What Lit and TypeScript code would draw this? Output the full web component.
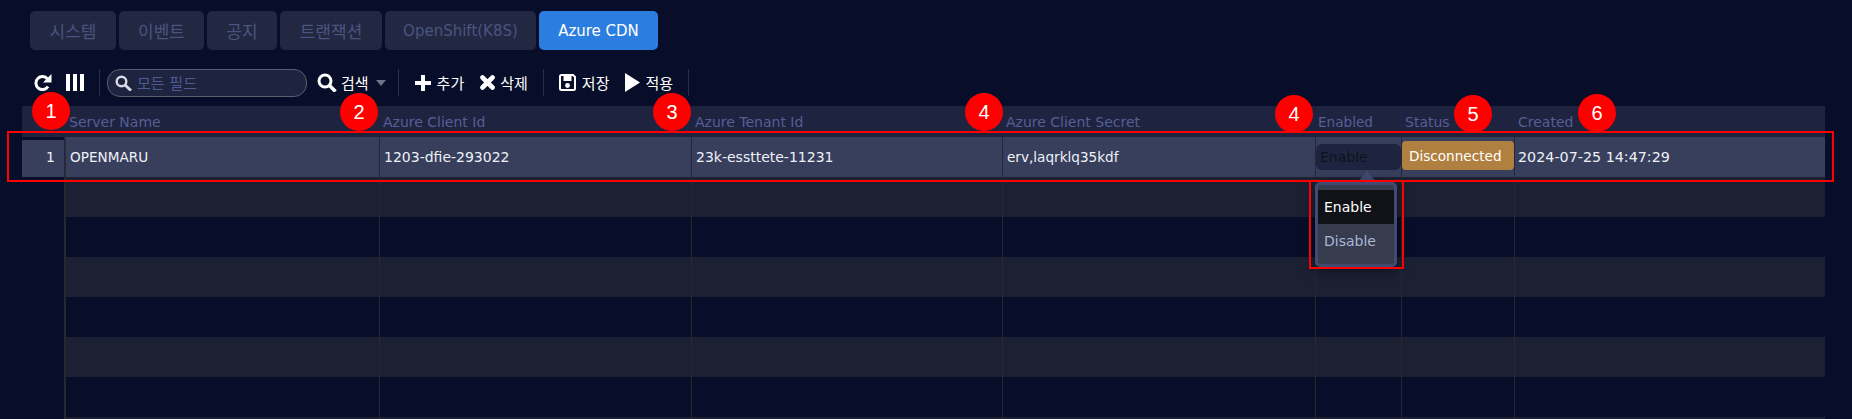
import { LitElement, html, css } from "lit";
import { customElement } from "lit/decorators.js";

@customElement("app-root")
export class AppRoot extends LitElement {
  static styles = css`
    :host {
      display: block;
      position: relative;
      width: 1852px;
      height: 419px;
      overflow: hidden;
      background: #080d29;
      font-family: "DejaVu Sans", "Noto Sans CJK KR", sans-serif;
      color: #fff;
    }
    .tabs { display: flex; gap: 3px; padding: 11px 0 0 30px; height: 39px; }
    .tab {
      height: 39px; border-radius: 5px; background: #222841; color: #4a5480;
      display: flex; align-items: center; justify-content: center; font-size: 15px;
    }
    .tab.ko { font-size: 17px; }
    .tab.active { background: #2b7de0; color: #fff; }
    .toolbar { display: flex; align-items: center; height: 27px; margin-top: 19px; padding-left: 33px; font-size: 15px; }
    .sep { width: 1px; height: 27px; background: #2a2f45; flex: none; }
    .search-box {
      box-sizing: border-box; width: 200px; height: 28px; border: 1px solid #5c5f6c; border-radius: 13px;
      background: #1e2340; display: flex; align-items: center; padding-left: 7px; gap: 5px; color: #4d5a94; font-size: 15px;
    }
    .tool { display: flex; align-items: center; gap: 5px; }
    .tool.wide { gap: 6px; }
    .grid { margin: 10px 0 0 22px; width: 1803px; }
    .row { display: grid; grid-template-columns: 42px 2px 313px 1px 311px 1px 310px 1px 312px 1px 85px 1px 112px 1px 1fr; height: 40px; }
    .head { height: 31px; background: #1e2340; color: #565f94; font-size: 14px; align-items: center; }
    .head .c { padding-left: 3px; }
    .head .c.narrow { padding-left: 2px; font-size: 13.6px; }
    .row.stripe > .c { background: #1b2033; }
    .row.sel { font-size: 14px; color: #eef1f8; }
    .row.sel > .c { background: #383f5c; }
    .c { display: flex; align-items: center; padding-left: 4px; white-space: nowrap; min-width: 0; }
    .v { background: #26282e; }
    .row.sel .v { background: #24283c; }
    .row.sel > .num { justify-content: flex-end; padding-right: 9px; margin-top: 3px; padding-bottom: 3px; }
    .badge-off { box-sizing: border-box; margin-top: -1px; height: 26px; width: 86px; border-radius: 6px; background: #1e2440; color: #10121c; padding-left: 4px; display: flex; align-items: center; }
    .status { height: 29px; width: 112px; margin-top: -3px; border-radius: 4px; background: #b08040; color: #fff; padding-left: 7px; display: flex; align-items: center; box-sizing: border-box; font-size: 13.6px; }
    .c.pill { padding: 0; }
    .tight { font-size: 13.6px; }
    .c.date { font-size: 14.3px; padding-left: 3px; }
    .mark {
      position: absolute; width: 38px; height: 38px; border-radius: 50%; background: #f00; color: #fff;
      display: flex; align-items: center; justify-content: center; font: 20px "Liberation Sans", sans-serif;
    }
    .box { position: absolute; box-sizing: border-box; border: 2px solid #f00; }
    .pop {
      position: absolute; left: 1315px; top: 182px; width: 82px; height: 85px; box-sizing: border-box;
      border: 3px solid #414a70; border-radius: 5px; background: #363c4d; padding-top: 5px;
      box-shadow: 0 4px 14px rgba(0,0,0,.5); font-size: 14px;
    }
    .pop div { height: 34px; display: flex; align-items: center; padding-left: 6px; color: #a9b6d6; }
    .pop .on { background: #101218; color: #fff; }
    .arrow { position: absolute; left: 1357px; top: 171px; }
  `;

  render() {
    const tabs = [["시스템", 86, 1], ["이벤트", 85, 1], ["공지", 70, 1], ["트랜잭션", 102, 1], ["OpenShift(K8S)", 151, 0], ["Azure CDN", 119, 0]] as const;
    const stripe = (s: boolean) => html`<div class="row ${s ? "stripe" : ""}">
      ${Array.from({ length: 15 }, (_, i) => {
        if (i === 0) return html`<div></div>`;
        return i % 2 === 1 ? html`<div class="v"></div>` : html`<div class="c"></div>`;
      })}
    </div>`;
    const marks = [[32, 92, 1], [340, 93, 2], [653, 93, 3], [965, 93, 4], [1275, 95, 4], [1454, 95, 5], [1578, 94, 6]];
    return html`
      <div class="tabs">
        ${tabs.map(([t, w, k], i) => html`<div class="tab ${i === 5 ? "active" : ""} ${k ? "ko" : ""}" style="width:${w}px">${t}</div>`)}
      </div>
      <div class="toolbar">
        <svg width="19" height="17" viewBox="0 0 19 17" style="margin-right:14px"><path d="M15 12.5A6.5 6.5 0 1 1 14.5 5" fill="none" stroke="#fff" stroke-width="3"/><path d="M18.5 0v8.5H10z" fill="#fff"/></svg>
        <svg width="18" height="17" viewBox="0 0 18 17" style="margin-right:15px"><path d="M0 0h4v17H0zM7 0h4v17H7zM14 0h4v17h-4z" fill="#fff"/></svg>
        <div class="sep" style="margin-right:7px"></div>
        <div class="search-box">
          <svg width="17" height="16" viewBox="0 0 17 16"><circle cx="6.5" cy="6.5" r="4.8" fill="none" stroke="#d7dae4" stroke-width="2.4"/><path d="M10 10l6 5.5" stroke="#d7dae4" stroke-width="3"/></svg>
          모든 필드
        </div>
        <div class="tool" style="margin-left:10px">
          <svg width="20" height="19" viewBox="0 0 20 19"><circle cx="8" cy="8" r="6" fill="none" stroke="#fff" stroke-width="3"/><path d="M12.5 12.5l6 6" stroke="#fff" stroke-width="3.5"/></svg>
          <span style="margin-left:-1px">검색</span>
          <svg width="10" height="6" viewBox="0 0 10 6" style="margin-left:2px"><path d="M0 0h10L5 6z" fill="#6f7488"/></svg>
        </div>
        <div class="sep" style="margin:0 16px 0 12px"></div>
        <div class="tool wide">
          <svg width="16" height="16" viewBox="0 0 16 16"><path d="M6 0h4v6h6v4h-6v6H6v-6H0V6h6z" fill="#fff"/></svg>
          <span>추가</span>
        </div>
        <div class="tool" style="margin-left:16px">
          <svg width="15" height="15" viewBox="0 0 15 15"><path d="M2.5 2.5l10 10M12.5 2.5l-10 10" stroke="#fff" stroke-width="4.6" stroke-linecap="round"/></svg>
          <span>삭제</span>
        </div>
        <div class="sep" style="margin:0 15px"></div>
        <div class="tool wide">
          <svg width="17" height="17" viewBox="0 0 17 17"><path d="M2.5 1H14l2 2v11.5a1.5 1.5 0 0 1-1.5 1.5h-12A1.5 1.5 0 0 1 1 14.5v-12A1.5 1.5 0 0 1 2.5 1z" fill="none" stroke="#fff" stroke-width="2"/><path d="M4.5 2h8v5h-8z" fill="#fff"/><circle cx="8.5" cy="11.5" r="2.4" fill="#fff"/></svg>
          <span>저장</span>
        </div>
        <div class="tool" style="margin-left:16px">
          <svg width="15" height="19" viewBox="0 0 15 19"><path d="M0 0l15 9.5L0 19z" fill="#fff"/></svg>
          <span>적용</span>
        </div>
        <div class="sep" style="margin-left:15px"></div>
      </div>
      <div class="grid">
        <div class="row head">
          <div></div><div></div>
          <div class="c">Server Name</div><div></div>
          <div class="c">Azure Client Id</div><div></div>
          <div class="c">Azure Tenant Id</div><div></div>
          <div class="c">Azure Client Secret</div><div></div>
          <div class="c narrow">Enabled</div><div></div>
          <div class="c">Status</div><div></div>
          <div class="c">Created</div>
        </div>
        <div class="row sel">
          <div class="c num">1</div><div class="v"></div>
          <div class="c tight">OPENMARU</div><div class="v"></div>
          <div class="c">1203-dfie-293022</div><div class="v"></div>
          <div class="c">23k-essttete-11231</div><div class="v"></div>
          <div class="c tight">erv,laqrklq35kdf</div><div class="v"></div>
          <div class="c pill"><div class="badge-off">Enable</div></div><div class="v"></div>
          <div class="c pill"><div class="status">Disconnected</div></div><div class="v"></div>
          <div class="c date">2024-07-25 14:47:29</div>
        </div>
        ${stripe(true)}${stripe(false)}${stripe(true)}${stripe(false)}${stripe(true)}${stripe(false)}${stripe(true)}
      </div>
      ${marks.map(([x, y, n]) => html`<div class="mark" style="left:${x}px;top:${y}px">${n}</div>`)}
      <div class="box" style="left:7px;top:131px;width:1827px;height:51px"></div>
      <svg class="arrow" width="20" height="12" viewBox="0 0 20 12"><path d="M0 12L10 0l10 12z" fill="#414a70"/></svg>
      <div class="pop"><div class="on">Enable</div><div>Disable</div></div>
      <div class="box" style="left:1309px;top:180px;width:95px;height:89px"></div>
    `;
  }
}
